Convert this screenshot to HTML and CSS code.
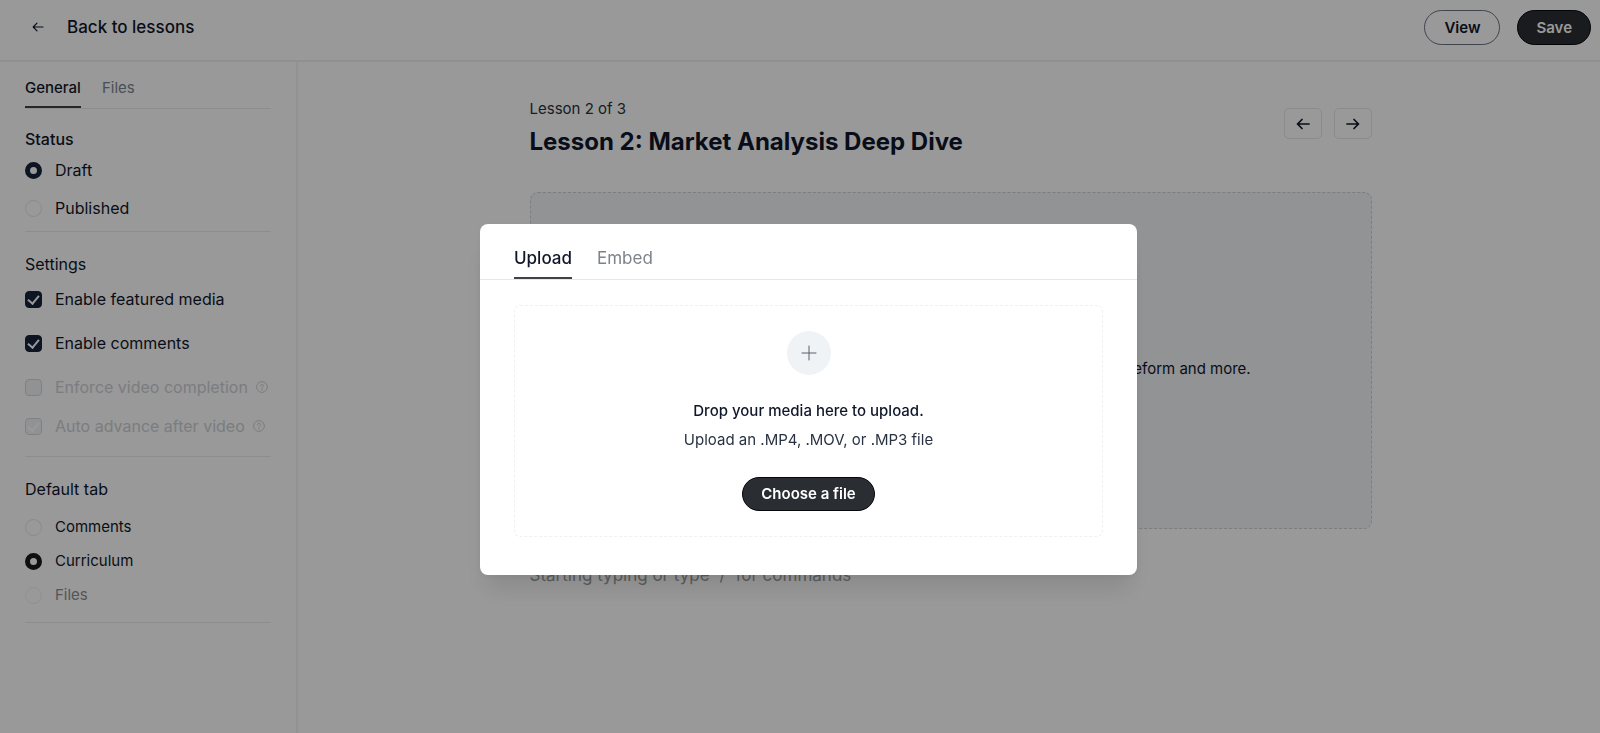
FILE: index.html
```html
<!DOCTYPE html>
<html lang="en">
<head>
<meta charset="utf-8">
<meta name="viewport" content="width=device-width, initial-scale=1">
<title>Lesson 2: Market Analysis Deep Dive</title>
<link rel="stylesheet" href="styles.css">
</head>
<body>
<div class="app">
  <header class="topbar">
    <a class="back" href="#">
      <svg class="back-icon" width="12" height="10" viewBox="0 0 12 10" aria-hidden="true"><path d="M11 5H1.2M5 1.2 1.2 5 5 8.8"/></svg>
      <span>Back to lessons</span>
    </a>
    <div class="topbar-actions">
      <button class="btn btn-outline" type="button">View</button>
      <button class="btn btn-solid" type="button">Save</button>
    </div>
  </header>

  <div class="body">
    <aside class="sidebar">
      <nav class="tabs">
        <button class="tab tab-active" type="button">General</button>
        <button class="tab" type="button">Files</button>
      </nav>

      <section class="group group-status">
        <h2 class="group-title group-title-strong">Status</h2>
        <label class="option"><input class="radio" type="radio" name="status" checked>Draft</label>
        <label class="option"><input class="radio" type="radio" name="status">Published</label>
      </section>

      <section class="group group-settings">
        <h2 class="group-title">Settings</h2>
        <label class="option"><input class="check" type="checkbox" checked>Enable featured media</label>
        <label class="option"><input class="check" type="checkbox" checked>Enable comments</label>
        <label class="option option-locked"><input class="check" type="checkbox" disabled>Enforce video completion
          <svg class="help" width="12" height="12" viewBox="0 0 12 12" aria-hidden="true"><circle cx="6" cy="6" r="5.4"/><path d="M4.5 4.8a1.5 1.5 0 1 1 2.2 1.3c-.5.3-.7.5-.7 1M6 8.3v.8"/></svg>
        </label>
        <label class="option option-locked option-last"><input class="check" type="checkbox" checked disabled>Auto advance after video
          <svg class="help" width="12" height="12" viewBox="0 0 12 12" aria-hidden="true"><circle cx="6" cy="6" r="5.4"/><path d="M4.5 4.8a1.5 1.5 0 1 1 2.2 1.3c-.5.3-.7.5-.7 1M6 8.3v.8"/></svg>
        </label>
      </section>

      <section class="group group-default">
        <h2 class="group-title">Default tab</h2>
        <label class="option"><input class="radio" type="radio" name="tab">Comments</label>
        <label class="option"><input class="radio radio-dark" type="radio" name="tab" checked>Curriculum</label>
        <label class="option option-muted"><input class="radio" type="radio" name="tab" disabled>Files</label>
      </section>
    </aside>

    <main class="main">
      <div class="lesson">
        <div class="lesson-head">
          <div>
            <p class="lesson-count">Lesson 2 of 3</p>
            <h1 class="lesson-title">Lesson 2: Market Analysis Deep Dive</h1>
          </div>
          <div class="pager">
            <button class="pager-btn" type="button" aria-label="Previous lesson"><svg width="14" height="12" viewBox="0 0 14 12"><path d="M13 6H1.5M6 1.5 1.5 6 6 10.5"/></svg></button>
            <button class="pager-btn" type="button" aria-label="Next lesson"><svg width="14" height="12" viewBox="0 0 14 12"><path d="M1 6h11.5M8 1.5 12.5 6 8 10.5"/></svg></button>
          </div>
        </div>
        <div class="media">
          <p class="media-text">Add video, audio or embed from YouTube, Vimeo, Wistia, Loom, Typeform and more.</p>
        </div>
        <p class="editor">Starting typing or type '/' for commands</p>
      </div>
    </main>
  </div>
</div>

<div class="overlay">
  <div class="modal" role="dialog" aria-label="Upload media">
    <nav class="modal-tabs">
      <button class="modal-tab modal-tab-active" type="button">Upload</button>
      <button class="modal-tab" type="button">Embed</button>
    </nav>
    <div class="modal-body">
      <div class="dropzone">
        <span class="plus"><svg width="16" height="16" viewBox="0 0 16 16" aria-hidden="true"><path d="M8 1v14M1 8h14"/></svg></span>
        <p class="drop-title">Drop your media here to upload.</p>
        <p class="drop-hint">Upload an .MP4, .MOV, or .MP3 file</p>
        <button class="btn btn-solid btn-file" type="button">Choose a file</button>
      </div>
    </div>
  </div>
</div>
</body>
</html>
```
FILE: styles.css
```css
* { box-sizing: border-box; }

body {
  margin: 0;
  background: #fff;
  color: #0f172a;
  font: 400 15px/20px Inter, "Liberation Sans", sans-serif;
}

h1, h2, p { margin: 0; }
button { font: inherit; color: inherit; cursor: pointer; }
svg { fill: none; stroke: currentColor; stroke-linecap: round; stroke-linejoin: round; }

.app { display: flex; flex-direction: column; min-height: 100vh; }

/* Top bar */
.topbar {
  display: flex;
  justify-content: space-between;
  align-items: flex-start;
  height: 62px;
  padding: 10px 9px 0 32px;
  border-bottom: 2px solid #f1f1f1;
}
.back {
  display: flex;
  align-items: center;
  gap: 23px;
  height: 34px;
  color: inherit;
  font-size: 17px;
  font-weight: 500;
  text-decoration: none;
}
.back-icon { stroke-width: 1.2; }
.topbar-actions { display: flex; gap: 17px; }

.btn {
  height: 35px;
  padding: 0 19px;
  border: 1px solid #05070a;
  border-radius: 18px;
  font-weight: 600;
}
.btn-outline { background: #fff; border-color: #6b7280; }
.btn-solid { padding: 0 18px; background: #2a2d32; color: #fff; }

/* Sidebar */
.body { display: flex; flex: 1; }
.sidebar {
  flex: none;
  width: 298px;
  padding: 16px 25px 0;
  border-right: 2px solid #f4f4f4;
}
.tabs {
  display: flex;
  gap: 21px;
  border-bottom: 1px solid #ececec;
}
.tab {
  padding: 0 0 8px;
  border: 0;
  border-bottom: 2px solid transparent;
  background: none;
  color: #7b8490;
}
.tab-active { color: #0f172a; font-weight: 500; border-color: #3f4246; }

.group {
  display: flex;
  flex-direction: column;
  border-bottom: 1px solid #ececec;
}
.group-title { font-size: 16px; font-weight: 400; line-height: 20px; }
.group-title-strong { font-weight: 500; }
.option { display: flex; align-items: center; gap: 13px; }

.group-status, .group-settings { font-size: 16px; }
.group-status { gap: 18px; padding: 20px 0 13px; }
.group-status .group-title { margin-bottom: -7px; }
.group-settings { gap: 24px; padding: 22px 0 20px; }
.group-settings .group-title { margin-bottom: -9px; }
.group-default { gap: 14px; padding: 22px 0 17px; }
.group-default .group-title { margin-bottom: 4px; }
.option-last { margin-top: -5px; }
.option-locked { color: #cdd0d5; }
.option-muted { color: #8e8e8e; }
.help { margin-left: -5px; }

.radio, .check {
  appearance: none;
  flex: none;
  width: 17px;
  height: 17px;
  margin: 0;
  border: 1px solid #e6e6e6;
  background: #fff;
}
.radio { border-radius: 50%; }
.radio:checked { border: 5px solid #18243a; }
.radio-dark:checked { border-color: #17191d; }
.radio:disabled { border-color: #f0f0f0; }
.check { display: grid; place-items: center; border-radius: 4px; }
.check:checked { background: #18243a; border-color: #18243a; }
.check:disabled { background: #f1f4f7; border-color: #d5d8dc; }
.check:checked::after {
  content: "";
  width: 9px;
  height: 5px;
  margin-bottom: 2px;
  border: solid #fff;
  border-width: 0 0 2px 2px;
  transform: rotate(-50deg);
}

/* Lesson */
.main { flex: 1; padding: 36px 24px 0 27px; }
.lesson { max-width: 842px; margin: 0 auto; }
.lesson-head { display: flex; justify-content: space-between; align-items: center; }
.lesson-count { margin-top: 1px; color: #283241; }
.lesson-title { margin-top: 7px; font-size: 24px; font-weight: 700; line-height: 32px; }
.pager { display: flex; align-self: flex-start; gap: 12px; padding-top: 10px; }
.pager-btn {
  display: grid;
  place-items: center;
  width: 38px;
  height: 31px;
  padding: 0;
  border: 1px solid #e8e8e8;
  border-radius: 5px;
  background: #fff;
}
.pager-btn svg { stroke-width: 1.7; }
.media {
  display: grid;
  place-items: center;
  height: 337px;
  margin-top: 34px;
  padding-top: 17px;
  border: 1px dashed #cdd1d4;
  border-radius: 8px;
  background: #f4f6f8;
}
.editor { margin-top: 36px; color: #9a9a9a; font-size: 17px; }

/* Upload dialog */
.overlay {
  position: fixed;
  inset: 0;
  display: flex;
  justify-content: center;
  align-items: center;
  padding: 65px 0 0 17px;
  background: rgba(0, 0, 0, 0.4);
}
.modal {
  width: 657px;
  max-width: 100%;
  border-radius: 8px;
  background: #fff;
  box-shadow: 0 20px 24px -6px rgba(0, 0, 0, 0.1), 0 2px 8px rgba(0, 0, 0, 0.05);
}
.modal-tabs {
  display: flex;
  gap: 25px;
  padding: 24px 34px 0;
  border-bottom: 1px solid #e6e6e6;
}
.modal-tab {
  padding: 0 0 9px;
  border: 0;
  border-bottom: 2px solid transparent;
  background: none;
  color: #7d838c;
  font-size: 17px;
}
.modal-tab-active { color: #0f172a; font-weight: 500; border-color: #3f4246; }
.modal-body { padding: 25px 34px 38px; }
.dropzone {
  display: flex;
  flex-direction: column;
  align-items: center;
  padding: 25px 16px;
  border: 1px dashed #f0f0f0;
  border-radius: 6px;
}
.plus {
  display: grid;
  place-items: center;
  width: 44px;
  height: 44px;
  border-radius: 50%;
  background: #eff3f6;
  color: #5a616b;
}
.drop-title { margin-top: 26px; font-weight: 500; }
.drop-hint { margin-top: 9px; color: #283241; }
.btn-file { height: 34px; margin-top: 27px; }
```
